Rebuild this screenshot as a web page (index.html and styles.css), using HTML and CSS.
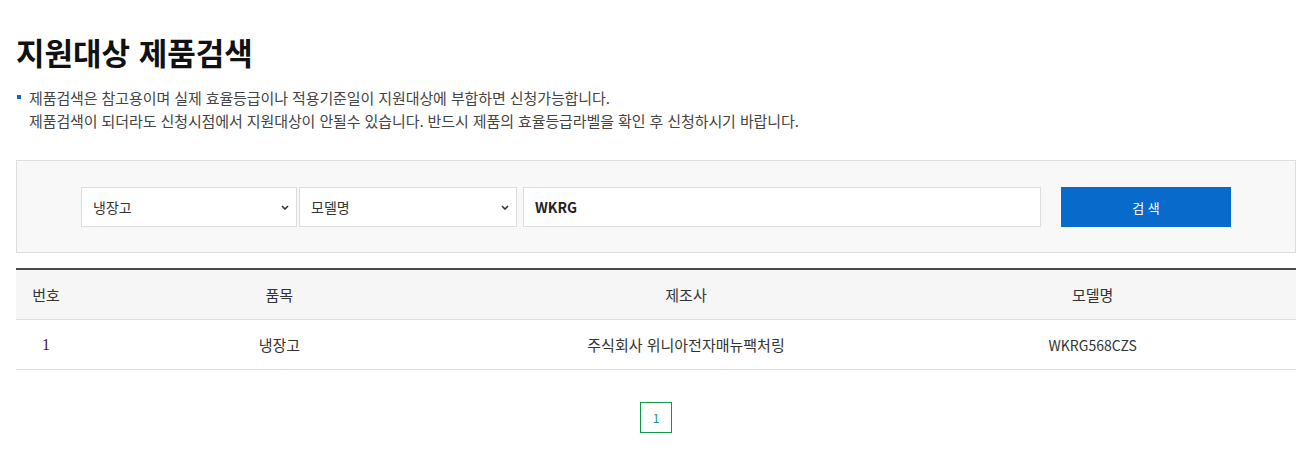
FILE: index.html
```html
<!DOCTYPE html>
<html lang="ko">
<head>
<meta charset="utf-8">
<title>지원대상 제품검색</title>
<link rel="stylesheet" href="styles.css">
</head>
<body>
<div class="wrap">
  <h1 class="title">지원대상 제품검색</h1>
  <ul class="notice">
    <li>제품검색은 참고용이며 실제 효율등급이나 적용기준일이 지원대상에 부합하면 신청가능합니다.<br>제품검색이 되더라도 신청시점에서 지원대상이 안될수 있습니다. 반드시 제품의 효율등급라벨을 확인 후 신청하시기 바랍니다.</li>
  </ul>
  <div class="search-box">
    <div class="search-row">
      <div class="select sel1"><span>냉장고</span><svg viewBox="0 0 8 5" class="chev"><path d="M1 1l3 3 3-3" fill="none" stroke="#333" stroke-width="1.6"/></svg></div>
      <div class="select sel2"><span>모델명</span><svg viewBox="0 0 8 5" class="chev"><path d="M1 1l3 3 3-3" fill="none" stroke="#333" stroke-width="1.6"/></svg></div>
      <div class="input">WKRG</div>
      <div class="btn">검 색</div>
    </div>
  </div>
  <div class="table">
    <div class="tr th">
      <div class="c1">번호</div>
      <div class="c">품목</div>
      <div class="c">제조사</div>
      <div class="c">모델명</div>
    </div>
    <div class="tr td">
      <div class="c1 num">1</div>
      <div class="c ko">냉장고</div>
      <div class="c ko">주식회사 위니아전자매뉴팩처링</div>
      <div class="c">WKRG568CZS</div>
    </div>
  </div>
  <div class="paging"><span class="page">1</span></div>
</div>
</body>
</html>
```
FILE: styles.css
```css
* { box-sizing: border-box; }
html, body { margin: 0; padding: 0; background: #fff; }
body {
  font-family: "Noto Sans CJK KR", "Noto Sans", sans-serif;
  color: #333;
}
.wrap {
  margin: 0 14px 0 16px;
  padding-top: 30px;
}
.title {
  margin: 0;
  font-size: 31px;
  font-weight: 700;
  color: #111;
  line-height: 44px;
  letter-spacing: 0;
}
.notice {
  list-style: none;
  margin: 12px 0 0 0;
  padding: 0;
}
.notice li {
  position: relative;
  padding-left: 13px;
  font-size: 15px;
  line-height: 23px;
  color: #444;
  letter-spacing: -0.1px;
}
.notice li::before {
  content: "";
  position: absolute;
  left: 1px;
  top: 9px;
  width: 4px;
  height: 4px;
  background: #0a6acc;
}
.search-box {
  margin-top: 28px;
  border: 1px solid #ddd;
  background: #f8f8f8;
  padding: 26px 64px 25px 64px;
}
.search-row {
  display: flex;
  height: 40px;
}
.select, .input {
  background: #fff;
  border: 1px solid #ddd;
  height: 40px;
  display: flex;
  align-items: center;
  font-size: 14px;
  color: #333;
}
.select { justify-content: space-between; padding: 0 7px 0 11px; }
.sel1 { width: 216px; }
.sel2 { width: 218px; margin-left: 2px; }
.chev { width: 8px; height: 5px; }
.input {
  width: 518px;
  margin-left: 6px;
  padding-left: 11px;
  font-weight: 700;
  color: #222;
}
.btn {
  width: 170px;
  margin-left: 20px;
  background: #086acb;
  color: #fff;
  font-size: 13px;
  display: flex;
  align-items: center;
  justify-content: center;
}
.table {
  margin-top: 15px;
  border-top: 2px solid #4a4a4a;
}
.tr {
  display: flex;
  height: 50px;
  border-bottom: 1px solid #ddd;
  align-items: center;
  font-size: 14px;
  color: #333;
}
.th { background: #f6f6f6; font-size: 15px; }
.ko { font-size: 15px; letter-spacing: 0; }
.c1 { width: 60px; text-align: center; }
.c { flex: 1; text-align: center; }
.num {
  font-family: "Liberation Serif", "DejaVu Serif", serif;
  font-size: 16px;
  color: #4a2036;
}
.paging {
  margin-top: 32px;
  display: flex;
  justify-content: center;
}
.page {
  width: 32px;
  height: 31px;
  border: 1px solid #0a9a48;
  display: flex;
  align-items: center;
  justify-content: center;
  font-size: 12px;
  color: #138f8f;
}
```
